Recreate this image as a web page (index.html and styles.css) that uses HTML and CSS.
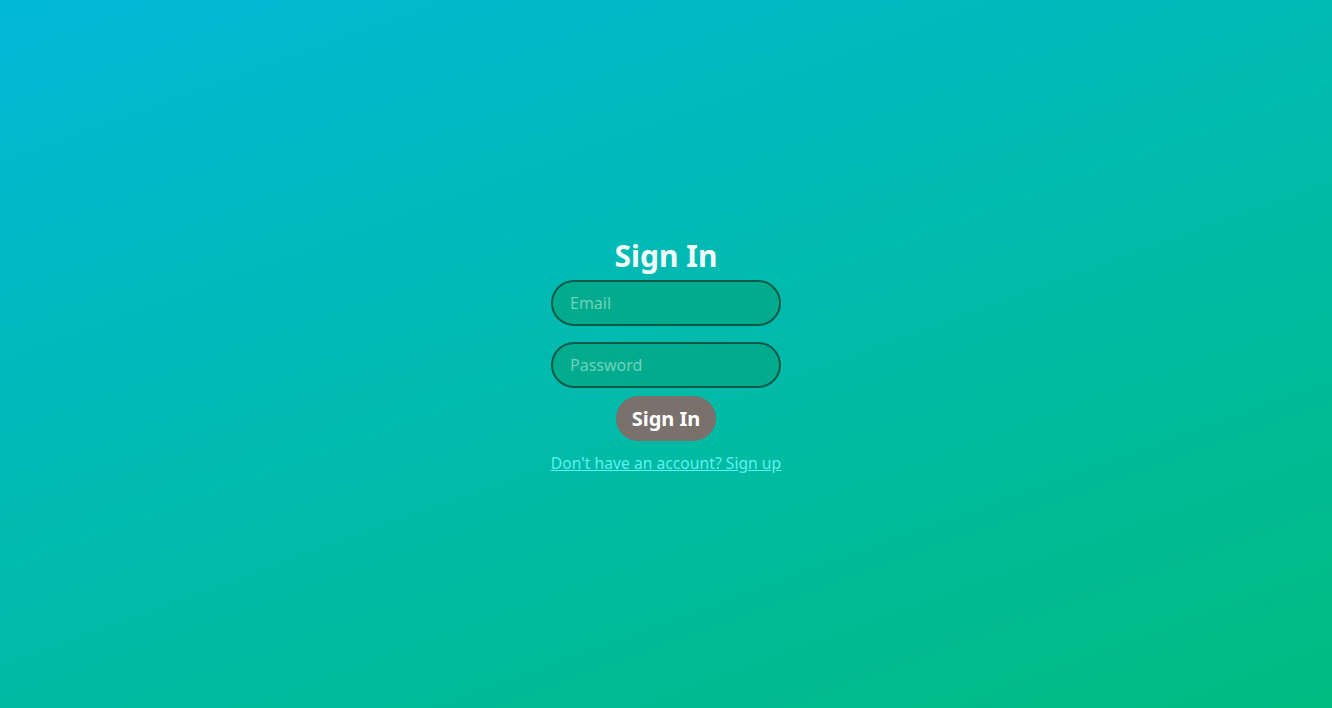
FILE: index.html
```html
<!DOCTYPE html>
<html lang="en">
<head>
<meta charset="utf-8">
<title>Sign In</title>
<link rel="stylesheet" href="styles.css">
</head>
<body>
<main class="page">
  <form class="signin">
    <h1 class="signin__title">Sign In</h1>
    <input class="signin__input" type="email" placeholder="Email">
    <input class="signin__input" type="password" placeholder="Password">
    <button class="signin__button" type="button">Sign In</button>
    <a class="signin__link" href="#">Don't have an account? Sign up</a>
  </form>
</main>
</body>
</html>
```
FILE: styles.css
```css
* { box-sizing: border-box; }
html, body { margin: 0; height: 100%; }
body {
  font-family: "Noto Sans", "Open Sans", sans-serif;
  background: linear-gradient(160deg, #02b8d8 0%, #00bc80 100%);
  color: #fff;
}
.page {
  height: 100%;
  display: flex;
  align-items: center;
  justify-content: center;
  padding-top: 2px;
}
.signin {
  width: 230px;
  display: flex;
  flex-direction: column;
  align-items: center;
}
.signin__title {
  margin: 0 0 4px;
  font-size: 30px;
  line-height: 40px;
  font-weight: 700;
  color: #f2fbfb;
}
.signin__input {
  width: 230px;
  height: 46px;
  margin-bottom: 16px;
  padding: 0 17px;
  border: 2px solid #0b5a48;
  border-radius: 23px;
  background: #03ab8e;
  font-family: inherit;
  font-size: 16px;
  color: #fff;
  outline: none;
}
.signin__input::placeholder { color: #6fd1bb; }
.signin__input + .signin__input { margin-bottom: 8px; }
.signin__button {
  width: 100px;
  height: 45px;
  border: none;
  border-radius: 23px;
  background: #7a716c;
  color: #fff;
  font-family: inherit;
  font-size: 20px;
  font-weight: 700;
  margin-bottom: 11px;
}
.signin__link {
  color: #5ef0f0;
  font-size: 15.7px;
  line-height: 22px;
  white-space: nowrap;
}
```
